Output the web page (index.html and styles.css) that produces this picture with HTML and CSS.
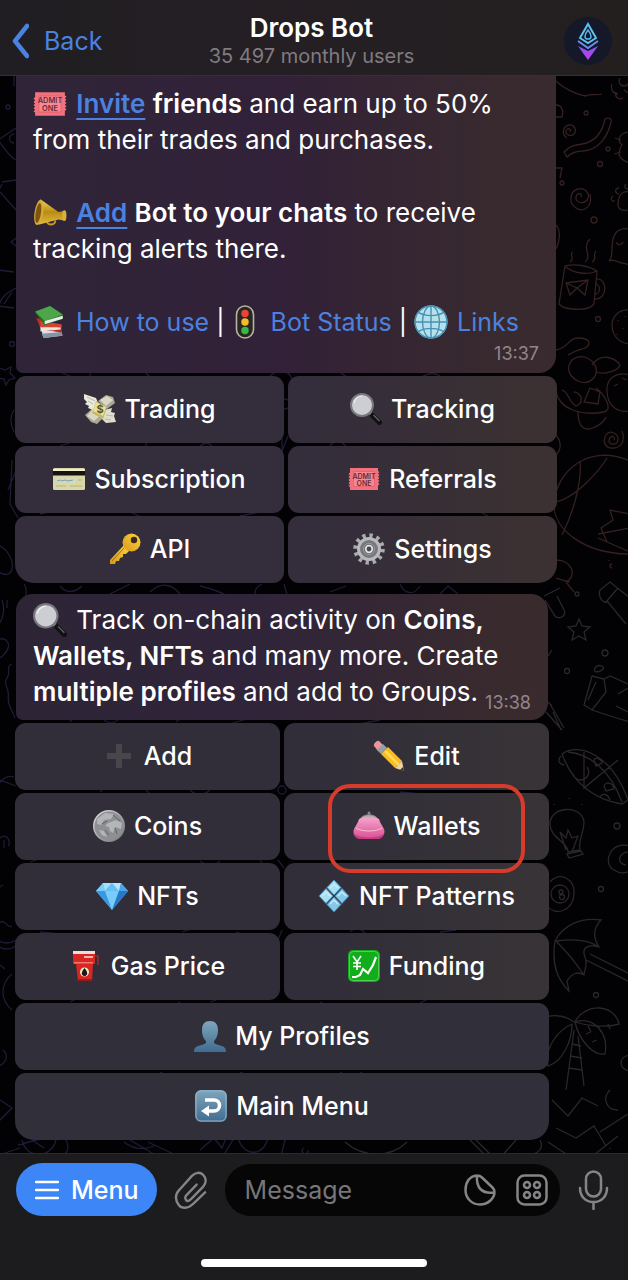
FILE: index.html
```html
<!DOCTYPE html>
<html lang="en">
<head>
    <meta charset="UTF-8">
    <meta name="viewport" content="width=device-width, initial-scale=1.0">
    <title>Drops Bot</title>
    <link rel="stylesheet" href="styles.css">
</head>
<body>
    <!-- Emoji set -->
    <svg class="sprite" width="0" height="0" aria-hidden="true">
        <defs>
            <linearGradient id="gold" x1="0" y1="0" x2="0" y2="1">
                <stop offset="0" stop-color="#f3dc5a"/><stop offset=".5" stop-color="#b98a14"/><stop offset="1" stop-color="#e3bd3c"/>
            </linearGradient>
            <linearGradient id="silver" x1="0" y1="0" x2="1" y2="1">
                <stop offset="0" stop-color="#e4e4e6"/><stop offset="1" stop-color="#6f7073"/>
            </linearGradient>
            <linearGradient id="steel" x1="0" y1="0" x2="0" y2="1">
                <stop offset="0" stop-color="#7fa6bd"/><stop offset="1" stop-color="#3f6c90"/>
            </linearGradient>
            <linearGradient id="key-gold" x1="0" y1="1" x2="1" y2="0">
                <stop offset="0" stop-color="#d59a1c"/><stop offset="1" stop-color="#ffd43c"/>
            </linearGradient>
            <linearGradient id="pink" x1="0" y1="0" x2="0" y2="1">
                <stop offset="0" stop-color="#f5a3cb"/><stop offset="1" stop-color="#d94f92"/>
            </linearGradient>
            <linearGradient id="logo" x1="0" y1="0" x2="0" y2="1">
                <stop offset="0" stop-color="#7a5cf0"/><stop offset=".5" stop-color="#a548ee"/><stop offset="1" stop-color="#c03be8"/>
            </linearGradient>
        </defs>
        <symbol id="ticket" viewBox="0 0 32 32">
            <path d="M2 5h28v3l1.500 1-1.500 1.500 1.500 1.500-1.500 1.500 1.500 1.500-1.500 1.500 1.500 1.500-1.500 1.500 1.500 1.500-1.500 1.500V27H2v-3L.5 23 2 21.500.5 20 2 18.500.5 17 2 15.500.5 14 2 12.500.5 11 2 9.500z" fill="#f2717e"/>
            <path d="M5.500 8.500h21v15h-21z" fill="#f78790" stroke="#df5f6e" stroke-width=".8"/>
            <text x="16" y="15.500" class="ticket-text">ADMIT</text>
            <text x="16" y="22.500" class="ticket-text">ONE</text>
        </symbol>
        <symbol id="horn" viewBox="0 0 32 32">
            <path d="M13 23c0 5 8 5 8 0" fill="none" stroke="#c39a25" stroke-width="1.800"/>
            <path d="M7 3l17 12 5-1v9l-5-1-19 5z" fill="url(#gold)"/>
            <ellipse cx="5.500" cy="15.500" rx="4" ry="12" transform="rotate(9 5.500 15.500)" fill="#d6ad36"/>
            <ellipse cx="5" cy="16" rx="2.500" ry="9.500" transform="rotate(9 5 16)" fill="#7d5510"/>
            <ellipse cx="29.500" cy="18.500" rx="2" ry="5" fill="#d8b13e"/>
        </symbol>
        <symbol id="books" viewBox="0 0 32 32">
            <path d="M8 24l19 1v4L10 31z" fill="#dcdde2"/><path d="M8 27l19-1.500 1 3.500-18 2z" fill="#8493a5"/>
            <path d="M3 12l4 10 20 4v-6z" fill="#b92d22"/><path d="M7 20l19 1v2l-19 2z" fill="#eee4dc"/><path d="M7 15l20 3v3L7 21z" fill="#d24434"/>
            <path d="M2 7l14-6 12 8v4l-17 6z" fill="#236f2b"/><path d="M2 6l14-5 12 8-17 6z" fill="#4fa64a"/><path d="M11 15l17-5v3l-17 5z" fill="#e8eee6"/>
        </symbol>
        <symbol id="light" viewBox="0 0 32 32">
            <rect x="8" y="1" width="16" height="30" rx="8" fill="#2a2723" stroke="#b9b3a3" stroke-width="1.500"/>
            <circle cx="16" cy="8" r="3.500" fill="#ec4339"/><circle cx="16" cy="16" r="3.500" fill="#f1bb29"/><circle cx="16" cy="24" r="3.500" fill="#35b948"/>
        </symbol>
        <symbol id="globe" viewBox="0 0 32 32">
            <circle cx="16" cy="16" r="15.500" fill="#b8e0ea"/>
            <g fill="none" stroke="#4391b5" stroke-width="1.300">
                <circle cx="16" cy="16" r="15"/><ellipse cx="16" cy="16" rx="8" ry="15"/><path d="M16 1v30M1 16h30M4 7c7 4 17 4 24 0M4 25c7-4 17-4 24 0"/>
            </g>
        </symbol>
        <symbol id="money" viewBox="0 0 32 32">
            <path d="M14 8l8-6 7 2 2 6-8 6zM9 15l-8 7 6 7 6 2 8-8z" fill="#aaa894"/>
            <path d="M16 7l7-4 6 4-7 6zM8 17l-5 6 7 5 6-5z" fill="#d9d8c6"/>
            <path d="M0 1l12 4 3 7-4 6-7-3 1-2-4-2 2-2-3-3z" fill="#e9e8da"/>
            <path d="M32 29l-10 1-5-5 3-8 8-2-1 4 4 1-1 3z" fill="#dfdecd"/>
            <path d="M12 8l11 6-4 12-11-6z" fill="#c4b568"/>
            <path d="M12 9l10 5-3 9-10-5z" fill="#e9df97"/>
            <text x="16" y="20" class="money-text">$</text>
            <path d="M3 4l8 4M4 8l5 3M21 26l6 1M22 22l7 1" stroke="#b1af9b" stroke-width=".8"/>
        </symbol>
        <symbol id="magnifier" viewBox="0 0 32 32">
            <path d="M20 20l3 3" stroke="#9b9ba0" stroke-width="3"/>
            <path d="M22.500 22.500l7 7" stroke="#111" stroke-width="5" stroke-linecap="round"/>
            <path d="M23.500 22l6 6" stroke="#66666c" stroke-width="1.200"/>
            <circle cx="12" cy="12" r="11" fill="#cdced4" stroke="#77777d" stroke-width="2"/>
            <path d="M4 10a8.500 8.500 0 0 1 8-7" fill="none" stroke="#f0f0f3" stroke-width="1.200"/>
        </symbol>
        <symbol id="card" viewBox="0 0 32 32">
            <rect y="5" width="32" height="22" rx="1.500" fill="#d9d7a5"/><path d="M0 6h32v2H0z" fill="#efedd0"/><path d="M0 8h32v4.500H0z" fill="#17140e"/>
            <path d="M3 15.500h19v4H3z" fill="#c9dcd3"/><path d="M4 18l3-1 2 1 3-1 3 1 5-1" stroke="#628490" fill="none" stroke-width=".7"/><path d="M25 17h4M3 23h10M17 23h12" stroke="#b5b38a" stroke-width="1"/>
        </symbol>
        <symbol id="key" viewBox="0 0 32 32">
            <path d="M15 12L1 27l0 4 5 0 1-3 3 0 1-3 3-1 0-3 3 0 4-4z" fill="url(#key-gold)"/>
            <path d="M15 15L3 28" stroke="#9d6d10" stroke-width="1"/>
            <circle cx="22.500" cy="9.500" r="9" fill="url(#key-gold)"/><circle cx="25" cy="7" r="3.200" fill="#3b2a14"/>
        </symbol>
        <symbol id="gear" viewBox="0 0 32 32">
            <circle cx="16" cy="16" r="13.500" fill="none" stroke="#a9abae" stroke-width="4.500" stroke-dasharray="3.300 3.769"/>
            <circle cx="16" cy="16" r="10.500" fill="#77797d" stroke="#b7b9bc" stroke-width="3"/>
            <circle cx="16" cy="16" r="5.500" fill="#62646a" stroke="#9b9da1"/><circle cx="16" cy="16" r="3.300" fill="#4a484e" stroke="#e0e1e3" stroke-width="1.800"/>
        </symbol>
        <symbol id="plus" viewBox="0 0 32 32"><path d="M13 4h6v9h9v6h-9v9h-6v-9H4v-6h9z" fill="#48464b"/></symbol>
        <symbol id="pencil" viewBox="0 0 32 32">
            <path d="M1 6c-1-2 3-6 5-5l4 4-5 6z" fill="#ef959a"/><path d="M4 10l6-6 4 4-6 6z" fill="#8fa0ab"/>
            <path d="M8 14l7-7 14 14-7 7z" fill="#f6bd24"/><path d="M12 11l14 14" stroke="#ffdb52" stroke-width="2.500"/>
            <path d="M29 21l2 10-9-3z" fill="#efd0a0"/><path d="M31 31l-1-4-3 3z" fill="#33302e"/>
        </symbol>
        <symbol id="coin" viewBox="0 0 32 32">
            <circle cx="16" cy="16" r="16" fill="url(#silver)"/><circle cx="16" cy="16" r="14.500" fill="#8e8f92"/>
            <path d="M4 9l8-6 9 1-3 5-7 1-3 5-4-1zM15 13l8-3 6 3-1 6-6-2-2 6-3-2-1-4-4-1zM6 20l5 1 3 6-5-2z" fill="#b4b5b8"/>
            <path d="M20 5l7 6M9 14l5-3M22 18l2 6M12 20l4 5" stroke="#626367" stroke-width="1"/>
        </symbol>
        <symbol id="purse" viewBox="0 0 32 32">
            <circle cx="16" cy="3" r="1.500" fill="#8d8b84"/><path d="M6 13C6 2 26 2 26 13z" fill="#b9a9ac" stroke="#8b8184"/>
            <path d="M6 9c5-2 15-2 20 0 1 4 3 6 5 10 2 6-3 10-7 10H8c-5 0-9-4-7-10 2-4 4-6 5-10z" fill="url(#pink)"/>
            <path d="M3 18c6 4 20 4 26 0" fill="none" stroke="#f8bfdb" stroke-width="1"/><path d="M1 23c3 6 27 6 30 0-1 5-4 6-8 6H9c-4 0-7-2-8-6z" fill="#c83983"/>
        </symbol>
        <symbol id="gem" viewBox="0 0 32 32">
            <path d="M7 3h18l7 8-16 19L0 11z" fill="#55b7f2"/><path d="M7 3L0 11h9z" fill="#79cdf8"/><path d="M7 3l2 8 7-8z" fill="#a5e0fb"/><path d="M16 3l-7 8h14z" fill="#65bef5"/><path d="M25 3l-2 8-7-8z" fill="#b9e5fb"/><path d="M25 3l7 8h-9z" fill="#4ba4ea"/>
            <path d="M0 11h9l7 19z" fill="#3a98e3"/><path d="M9 11h14l-7 19z" fill="#7bcbf9"/><path d="M23 11h9L16 30z" fill="#2878ca"/>
        </symbol>
        <symbol id="diamonds" viewBox="0 0 32 32">
            <g stroke="#4286b9" stroke-width="1"><path d="M16 0l7 7.500-7 7.500-7-7.500zM8 8.500l7 7.500-7 7.500L1 16z" fill="#a7e1f1"/><path d="M24 8.500l7 7.500-7 7.500-7-7.500zM16 17l7 7.500-7 7.500-7-7.500z" fill="#86c8e8"/></g>
            <path d="M12 8l4-4 4 4M4 16l4-4 4 4M20 16l4-4 4 4M12 24l4-4 4 4" fill="none" stroke="#c5ecf5" stroke-width="1.500"/>
        </symbol>
        <symbol id="fuel" viewBox="0 0 32 32">
            <path d="M25 6h3v9" fill="none" stroke="#a32a2a" stroke-width="1.500"/>
            <path d="M3 1h22v13h-2l-1 17H8L6 14H3z" fill="#d82722"/><path d="M3 1h22v3H3z" fill="#f0dcda"/><path d="M4 12h19v1.500H4z" fill="#f07972"/>
            <path d="M14 6h9v2h-9z" fill="#f3b2a8"/><circle cx="14.500" cy="22" r="4.500" fill="#f4e9cb"/><path d="M14.500 18c5 6 2 8 0 8s-5-2 0-8z" fill="#1c1a18"/><path d="M7 29h15v2H7z" fill="#981b1b"/>
        </symbol>
        <symbol id="chart" viewBox="0 0 32 32">
            <rect width="32" height="32" rx="5" fill="#12ad1c"/><rect x="1.500" y="1.500" width="29" height="29" rx="4" fill="none" stroke="#4fd252"/>
            <path d="M5 6l4 6 4-6M9 12v8M5 13h8M5 16.500h8" stroke="#fff" stroke-width="1.600" fill="none"/>
            <path d="M4 27h4l4-2 3-6 5 4 5-8 3-8" stroke="#fff" stroke-width="2.200" fill="none"/>
        </symbol>
        <symbol id="person" viewBox="0 0 32 32">
            <path d="M16 1c5 0 8 3 8 9s-2 9-4 11v2c4 3 12 2 12 8v1H0v-1c0-6 8-5 12-8v-2c-2-2-4-5-4-11s3-9 8-9z" fill="url(#steel)"/>
        </symbol>
        <symbol id="return" viewBox="0 0 32 32">
            <rect width="32" height="32" rx="6" fill="url(#steel)"/><rect x="1" y="1" width="30" height="30" rx="5" fill="none" stroke="#94b5ca"/>
            <path d="M10 10h9a5.500 5.500 0 0 1 0 11h-6" fill="none" stroke="#fff" stroke-width="3.500"/><path d="M6 21l8-5.500v11z" fill="#fff"/>
        </symbol>
    </svg>

    <!-- Wallpaper doodles -->
    <svg class="wallpaper" viewBox="0 0 628 1280" preserveAspectRatio="xMaxYMin slice" aria-hidden="true">
        <g class="doodle-warm">
            <path d="M556 81c8 8 22 14 30 15 6-3 10 0 16-2M612 84c-2 6 2 10 6 10M620 78c-2 4 0 8 4 8s6-4 4-8M616 92c-2 6 4 8 7 6M624 90l6 4"/>
            <path d="M556 105c6 0 8 6 6 12h-6M586 111a2 2 0 1 0 .1 4 2 2 0 0 0-.1-4"/>
            <path d="M570 132c2-3-3-5-4-1s5 6 8 3 1-10-5-9-8 9-2 13"/>
            <path d="M605 119c4-2 7 0 6 3-3 14-12 28-28 29-8 0-12 2-16 6l-3-5c6-6 10-7 18-8 12-2 20-10 23-25z"/>
            <circle cx="600" cy="164" r="2.500"/><circle cx="608" cy="149" r="2"/><circle cx="562" cy="183" r="2"/>
            <path d="M630 132c-10 0-14 8-8 13-4 6-6 14 8 18M621 140l-6-2M621 152l-7 2M556 168h6l-2 10"/>
            <path d="M581 197c2-4-4-5-5 0s7 8 11 3-1-13-9-11-10 14-2 19 17-2 14-14"/>
            <path d="M630 192c-10-2-12 6-12 14 2 6 8 4 12 4M619 188c-5 0-4 6 0 6M613 196c-3 2-2 6 2 5M626 184c-3 2 0 6 3 5"/>
            <circle cx="594" cy="220" r="3"/><circle cx="598" cy="319" r="2.500"/>
            <path d="M630 229c-14-2-18 6-18 20 0 6-1 10-3 12 7-3 10 3 14 2l7 2M616 242c2 4 6 3 7 0M556 225c5 6 4 16 0 24"/>
            <path d="M565 266c10-3 24 0 32 5l-3 33c-6 8-30 6-35 0zM565 266c8 8 24 9 32 5M596 279c12-2 12 22-2 20M595 284c6 0 6 10 0 10"/>
            <path d="M566 283l22-3-3 15-8-7-7 7zM566 283l11 5 11-8M570 262c6-4-2-8 3-10M585 262c8-6-4-14 5-23M592 262c6-3 0-8 4-11"/>
            <path d="M630 310c-24-2-24 32 0 34M618 320v1M623 328v1M617 334v1M625 316v1"/>
            <path d="M556 350c14-3 12-12 22-12 14 0 14 8 4 11-8 2-10 4-14 6M572 360c10-8 22 0 24 8 2 10-8 18-18 13s-12-14-6-21z"/>
            <path d="M592 365c10-14 24-6 28 0-2 6-16 10-24 7M556 392c4 18 26 24 48 20 10-2 0-18-8-24M562 390c8 3 6 12 14 16 10-4 4-14-2-14M578 412c0 12 4 18 12 17 6-2 14-6 16-12M590 388l10 4-2 12-14-2z"/>
            <path d="M630 375c-14-4-24 4-23 16 0 16 12 22 23 20M614 386l4-2M622 378l5 2"/>
            <path d="M614 440c2-4-4-5-5 0s8 6 9 0-8-11-12-5-1 14 8 13 11-9 8-17"/>
            <path d="M556 435c5 6 6 14 0 20M630 461c-40-18-74 9-76 43-1 25 30 50 76 50M580 461c2 20-6 50-18 74M607 458c-6 10-30 40-52 44"/>
            <path d="M630 514l-20-4 3 10-12 8 6 14M598 534l32-6M598 538l32 14"/>
            <path d="M556 560c16 0 22 16 10 22l8 10M556 578l14 4M609 560v1M612 564a2 2 0 1 0 .1 4"/>
        </g>
        <g class="doodle-gray">
            <path d="M545 600l10 16c4 4 12 0 9-6l-7-14M544 596l16-8M579 619l3 7 8 1-6 5 2 8-7-4-7 4 2-8-6-5 8-1z"/>
            <circle cx="605" cy="653" r="3"/><circle cx="567" cy="671" r="2.500"/><circle cx="577" cy="594" r="2"/>
            <path d="M600 590c-2 6 2 14 8 12l18 22M600 590l10-8 20 16M606 602l12-14"/>
            <path d="M592 676l12 3 2 13-14 18-8-5zM604 679l6-3 18 8M596 672c-4-2 0-8 6-6 4 2-1 6-6 6M592 710c12 4 24 8 38 12M618 694l10-6M616 706l12 6M596 682l-8 18"/>
            <path d="M546 712l16 18M550 704l14 24M553 712l8 18M546 700l6 6M552 650l-4 6"/>
            <path d="M562 754c16-12 50 0 66 46l-6 4c-28-4-50-22-60-50zM561 756c-4 4-2 8 3 9M568 752c22 2 42 18 54 50M584 752v36l34-28M573 774a8 8 0 1 0 14-7M594 760c2-4 8 0 8 3l-6 3zM604 786c2-6 10-2 10 3l-8 2zM600 798c2-6 8-4 10 2"/>
            <path d="M568 852c0-10-18-14-18-28 0-18 32-20 34-2 0 12-6 16-4 28zM566 850l-6-18 6 6 2-8 4 8 6-2-6 16M567 854l14-3 2 3-14 4zM554 804v1M569 798v1M582 804v1"/>
            <circle cx="617" cy="826" r="3"/><circle cx="601" cy="889" r="2.500"/><circle cx="596" cy="995" r="2.500"/>
            <path d="M630 846c-20-6-28 18-16 24 6 4 12 3 16 1M630 852c-12-1-14 12-4 13"/>
            <path d="M550 882c10-12 26-2 24 12-1 18-20 22-27 12"/><circle cx="560" cy="894" r="9"/><circle cx="561" cy="892" r="2"/><circle cx="562" cy="897" r="2.500"/>
            <path d="M555 941c8-16 26-24 46-21-8 8-8 18-2 27-10-3-18 0-14 10 3 7 0 10-1 18-6-4-12-2-17 6l2 10c-10-10-18-24-14-50zM556 941c14-2 32-2 43 6M556 941c8 8 20 22 28 34M586 960l44 22M590 954l40 20"/>
            <path d="M575 1022c10-20 40-18 44 2-14 4-32 2-44-2zM575 1022c18-6 34 10 30 32-12 2-26-14-30-32zM574 1022c-10-8-26-8-34-2v14M572 1024c-14 6-28 24-24 42 14-4 24-24 24-42M574 1030l-8 60M578 1036l6 50M572 1044l9 2M570 1056l12 2M569 1068l13 2M588 1026l3 6M598 1026l3 6M608 1024l2 5M586 1034l5-2M592 1042l5-2"/>
            <path d="M630 1055c-12 2-12 14 0 16M552 1100l16 16 14-18 16 8M610 1090c-8 8-4 20 8 20M556 1128l20 10 18-12 12 20M600 1132l28-18M548 1142l24 16M590 1158l28-22M610 1148v1M470 1140l20 20M476 1140l20 20M500 1158l16-18M540 1140c8 16-20 18-30 14M345 1142c18 16 46 16 62 0"/>
        </g>
        <g class="doodle-cool">
            <circle cx="8" cy="107" r="2"/><path d="M14 76v10M-2 140l18-12M-2 140c8 10 12 18 18 20M14 134a4 4 0 1 0 0 9M2 182l14-2M0 192l16 18M2 184l-4 8M16 238l-5 4 5 4M-2 270l16 2M-2 310c2-14 10-18 18-22M-2 306l16 2M12 292l-8 12"/>
            <circle cx="12" cy="344" r="2.500"/><path d="M0 368l5 2 6-3-1 6 5 5-6 2-3 5-2-6-6-1M14 410c-4 6-4 14 0 22M12 460l-2 44 8 14M18 466l-10 24M-2 545c10 4 16 16 14 24s-10 6-14 2M2 600c4 10 0 20-3 24M7 600v8M-2 640c8-4 14 4 8 12s-8 6-8 4M12 664c-6 2-2 8-4 12s-4 6-1 12 0 10 2 16 4 8 6 14"/>
            <path d="M-2 785c6-8 10-10 16-8M0 780l16 6M0 838c6-6 12 4 8 8M4 840v8M-2 888l5-3M-2 924c8-8 8 6 14 2M-2 940c6 4 12 4 18 0M-2 946c6 4 12 4 18 0M12 974c-12 10-12 26 0 36M0 965l5 4M2 1050c8 4 4 14-4 16M0 1100l12 8-14 14"/>
            <path d="M20 1148l-18 6M18 1145l22-6M22 1140c4 20 30 18 34 0M32 1140l12 8M66 1140c4 8 2 14-8 18M124 1142c10 8 20 8 30 4M130 1140l34 20M148 1142l34 16M200 1150l14-12 8 10 4-10M222 1158l12-20M238 1138c6 20 26 18 30 0M286 1136l-6 24M304 1148a3 3 0 1 0 4 2"/>
            <path d="M24 584c4 6 2 14 0 20M60 586c8 10 18 4 22 0M110 594l20-10M150 592c12-12 24-6 30 2M200 586c10 2 20 6 28 10M262 584c-8 4-10 12-2 14M284 584l4 14M330 592l16-6M400 584c4 10 14 12 20 2M440 594l8-8 10 8M60 372l20 8M90 370v10M145 372l6 6M270 376c8-8 20-6 22 4M340 372c8 6 8 8 20 4M420 378c10-6 16-6 22 0M60 446l12-4M146 440v10M200 446c6-4 8-4 12 0M330 446c6-8 12-4 16 0M40 514l16-4M130 512l14 6M240 516l20-4M480 512l8 4M70 722l6-8M104 720c6 4 8 4 14 0M176 722l8-6M230 724l20-6M360 724l20-4M100 792l6-6M146 790l6 6M190 790c8 8 16 4 20 0M400 792l20 2M30 862l12-4M200 861c8 6 14 6 20 0M260 860l4 6M40 932l20 2M182 932l12-4M236 932l12 4M350 932c6-6 10-4 16 2M440 932l16-2M70 1002l8-4M178 1002l10 4M210 1002l12-4M320 1002l10 4M420 1003l8-4M160 1072l8 4M240 1072l10 4M340 1072c8 6 16 4 22 0"/>
            <circle cx="285" cy="404" r="5"/><circle cx="282" cy="790" r="4"/><path d="M282 438v16M288 436l-8 20M278 860l6 8M282 930l-4 10"/>
        </g>
    </svg>

    <header class="topbar">
        <button type="button" class="back">
            <svg width="18" height="36" viewBox="0 0 18 36" aria-hidden="true"><path d="M16 3L4 18l12 15" fill="none" stroke="#4b82e0" stroke-width="4.500" stroke-linecap="round" stroke-linejoin="round"/></svg>
            Back
        </button>
        <div class="chat-title">
            <h1>Drops Bot</h1>
            <p>35 497 monthly users</p>
        </div>
        <button type="button" class="avatar" aria-label="Bot profile">
            <svg width="24" height="38" viewBox="0 0 24 38" fill="none" aria-hidden="true">
                <path d="M12 2l8 14-8 5-8-5z" stroke="#59c2ef" stroke-width="2"/>
                <path d="M12 8c4 5 4 9 0 9s-4-4 0-9z" stroke="#59b4f0" stroke-width="1.500"/>
                <path d="M2 19l10 7 10-7" stroke="#6a8cf0" stroke-width="2"/>
                <path d="M2 24l10 5 10-5-10 14z" fill="url(#logo)"/>
            </svg>
        </button>
    </header>

    <main class="chat">
        <section class="block block-wide">
            <article class="message message-top">
                <p><svg class="emoji"><use href="#ticket"/></svg> <a href="#invite" class="strong-link">Invite</a> <b>friends</b> and earn up to 50% from their trades and purchases.</p>
                <p><svg class="emoji"><use href="#horn"/></svg> <a href="#add" class="strong-link">Add</a> <b>Bot to your chats</b> to receive tracking alerts there.</p>
                <p class="links"><svg class="emoji"><use href="#books"/></svg> <a href="#how">How to use</a> | <svg class="emoji emoji-light"><use href="#light"/></svg> <a href="#status">Bot Status</a> | <svg class="emoji"><use href="#globe"/></svg> <a href="#links">Links</a></p>
                <time>13:37</time>
            </article>
            <div class="keyboard">
                <button type="button"><svg class="emoji"><use href="#money"/></svg>Trading</button>
                <button type="button"><svg class="emoji"><use href="#magnifier"/></svg>Tracking</button>
                <button type="button"><svg class="emoji"><use href="#card"/></svg>Subscription</button>
                <button type="button"><svg class="emoji"><use href="#ticket"/></svg>Referrals</button>
                <button type="button" class="corner-left"><svg class="emoji"><use href="#key"/></svg>API</button>
                <button type="button" class="corner-right"><svg class="emoji"><use href="#gear"/></svg>Settings</button>
            </div>
        </section>

        <section class="block">
            <article class="message message-track">
                <p><svg class="emoji"><use href="#magnifier"/></svg> Track on-chain activity on <b>Coins, Wallets, NFTs</b> and many more. Create <b>multiple profiles</b> and add to Groups. <time>13:38</time></p>
            </article>
            <div class="keyboard keyboard-cool">
                <button type="button"><svg class="emoji"><use href="#plus"/></svg>Add</button>
                <button type="button"><svg class="emoji"><use href="#pencil"/></svg>Edit</button>
                <button type="button"><svg class="emoji"><use href="#coin"/></svg>Coins</button>
                <button type="button" class="marked"><svg class="emoji"><use href="#purse"/></svg>Wallets</button>
                <button type="button"><svg class="emoji"><use href="#gem"/></svg>NFTs</button>
                <button type="button"><svg class="emoji"><use href="#diamonds"/></svg>NFT Patterns</button>
                <button type="button"><svg class="emoji"><use href="#fuel"/></svg>Gas Price</button>
                <button type="button"><svg class="emoji"><use href="#chart"/></svg>Funding</button>
                <button type="button" class="full"><svg class="emoji"><use href="#person"/></svg>My Profiles</button>
                <button type="button" class="full corner-left corner-right"><svg class="emoji"><use href="#return"/></svg>Main Menu</button>
            </div>
        </section>
    </main>

    <footer class="composer">
        <div class="composer-row">
            <button type="button" class="menu-button">
                <svg width="24" height="20" viewBox="0 0 24 20" aria-hidden="true"><path d="M1 2h22M1 10h22M1 18h22" stroke="#fff" stroke-width="2.500" stroke-linecap="round"/></svg>
                Menu
            </button>
            <button type="button" class="icon-button attach" aria-label="Attach file">
                <svg width="34" height="38" viewBox="0 0 34 38"><path d="M23 13L12 24c-2 2-1 5 1 6 2 0 3-1 4-2l13-13c4-4 3-9 0-12s-8-3-12 1L5 18c-6 6-4 12-1 16s10 4 15-1l13-12" transform="translate(1 1) scale(.94 .97)"/></svg>
            </button>
            <div class="field">
                <input type="text" placeholder="Message" aria-label="Message">
                <button type="button" class="icon-button" aria-label="Stickers">
                    <svg width="32" height="32" viewBox="0 0 32 32"><path d="M13 1.500C5 2 1.500 9 1.500 16c0 8 6 14.500 14.500 14.500S30.500 24 30.500 18c0-2-.5-3-2-4.500L18 3.500C16.500 2 15 1.500 13 1.500zM13 1.500C12 14 18 20 30 18.500"/></svg>
                </button>
                <button type="button" class="icon-button" aria-label="Bot commands">
                    <svg width="32" height="32" viewBox="0 0 32 32"><rect x="1.500" y="1.500" width="29" height="29" rx="7"/><circle cx="11" cy="11" r="3"/><circle cx="21" cy="11" r="3"/><circle cx="11" cy="21" r="3"/><circle cx="21" cy="21" r="3"/></svg>
                </button>
            </div>
            <button type="button" class="icon-button" aria-label="Voice message">
                <svg width="32" height="40" viewBox="0 0 32 40"><rect x="8" y="1.500" width="15" height="25" rx="7.500"/><path d="M2 18c0 8 5 14 13.500 14S29 26 29 18M15.500 32v7"/></svg>
            </button>
        </div>
        <div class="home-indicator"></div>
    </footer>
</body>
</html>
```
FILE: styles.css
```css
* {
    box-sizing: border-box;
}

body {
    margin: 0;
    min-height: 100vh;
    display: flex;
    flex-direction: column;
    position: relative;
    overflow-x: hidden;
    background-color: #020104;
    color: #fff;
    font-family: Inter, Roboto, "Liberation Sans", sans-serif;
    font-size: 25px;
    line-height: 36px;
}

h1, p {
    margin: 0;
}

button {
    border: none;
    padding: 0;
    background: none;
    color: inherit;
    font: inherit;
    cursor: pointer;
}

a {
    color: #4b82e0;
    text-decoration: none;
}

b {
    font-weight: 600;
}

.sprite {
    position: absolute;
}

.ticket-text {
    font-size: 7px;
    font-weight: 600;
    text-anchor: middle;
    fill: #6b2a34;
}

.money-text {
    font-size: 11px;
    font-weight: 700;
    text-anchor: middle;
    fill: #5f5522;
}

.wallpaper {
    position: absolute;
    top: 0;
    left: 0;
    width: 100%;
    height: 100%;
    z-index: -1;
    fill: none;
    stroke-width: 1.3;
}

.doodle-warm {
    stroke: #35211f;
}

.doodle-gray {
    stroke: #2b2728;
}

.doodle-cool {
    stroke: #211b36;
}

/* Top bar */
.topbar {
    display: grid;
    grid-template-columns: 1fr auto 1fr;
    align-items: center;
    height: 76px;
    padding: 6px 16px 0 11px;
    background: linear-gradient(to right, #201e22, #251f24 50%, #231f1f);
    border-bottom: 1px solid #343136;
}

.back {
    display: flex;
    align-items: center;
    gap: 15px;
    justify-self: start;
    color: #4b82e0;
}

.chat-title {
    text-align: center;
}

.chat-title h1 {
    font-size: 26px;
    font-weight: 600;
    line-height: 30px;
}

.chat-title p {
    font-size: 20px;
    line-height: 26px;
    color: #7f7b80;
}

.avatar {
    display: flex;
    align-items: center;
    justify-content: center;
    justify-self: end;
    width: 48px;
    height: 48px;
    border-radius: 50%;
    background-color: #151829;
}

/* Messages */
.chat {
    flex: 1;
    padding: 0 0 12px 16px;
}

.block {
    margin-right: 80px;
    margin-bottom: 11px;
}

.block:last-child {
    margin-bottom: 0;
}

.block-wide {
    margin-right: 72px;
}

.message {
    padding: 8px 17px 10px;
    border-radius: 17px 17px 17px 7px;
    background: linear-gradient(to right, #2d2536, #30243a 45%, #392a2e 90%);
    font-size: 26px;
}

.message-top {
    padding: 10px 17px 5px;
    border-radius: 0 0 17px 7px;
    background: linear-gradient(to right, #2f2538, #322138 50%, #382a2e 90%);
}

.message-top p + p {
    margin-top: 37px;
}

.message time {
    font-size: 18px;
    line-height: 20px;
    color: #93868e;
}

.message-top time {
    display: block;
    line-height: 28px;
    text-align: right;
}

.message-track time {
    float: right;
    margin-top: 19px;
}

.strong-link {
    font-weight: 600;
    text-decoration: underline;
    text-decoration-thickness: 2px;
    text-underline-offset: 5px;
}

.links {
    font-size: 25px;
    white-space: nowrap;
}

.emoji {
    width: 34px;
    height: 34px;
    flex: none;
}

.message .emoji {
    margin-right: 2px;
    vertical-align: -8px;
}

.message .emoji-light {
    margin-left: -4px;
}

/* Inline keyboard */
.keyboard {
    display: grid;
    grid-template-columns: 1fr 1fr;
    gap: 3px 4px;
    margin: 3px -1px 0;
}

.keyboard button {
    display: flex;
    align-items: center;
    justify-content: center;
    gap: 9px;
    height: 67px;
    padding-bottom: 1px;
    border-radius: 11px;
    background: linear-gradient(to right, #342d3b 50%, #3b3132 85%) fixed;
    font-weight: 500;
}

.keyboard-cool button {
    background: linear-gradient(to right, #312e3a 50%, #373336 85%) fixed;
}

.keyboard .full {
    grid-column: 1 / -1;
    background: #31303a;
}

.keyboard .corner-left {
    border-bottom-left-radius: 19px;
}

.keyboard .corner-right {
    border-bottom-right-radius: 19px;
}

.keyboard .emoji {
    width: 32px;
    height: 32px;
}

.marked {
    position: relative;
}

.marked::after {
    content: "";
    position: absolute;
    top: -9px;
    right: 24px;
    bottom: -13px;
    left: 44px;
    border: 4px solid #d63b2b;
    border-radius: 22px;
}

/* Composer */
.composer {
    height: 127px;
    border-top: 1px solid #2b2a2e;
    background-color: #1c1c1f;
}

.composer-row {
    display: flex;
    align-items: center;
    padding: 9px 18px 0 16px;
}

.menu-button {
    display: flex;
    align-items: center;
    gap: 12px;
    height: 53px;
    padding: 0 18px 0 19px;
    border-radius: 27px;
    background-color: #3d86f7;
    font-weight: 500;
}

.icon-button {
    display: flex;
    flex: none;
}

.icon-button svg {
    fill: none;
    stroke: #858487;
    stroke-width: 2.5;
    stroke-linecap: round;
}

.attach {
    margin: 0 17px;
}

.field {
    display: flex;
    flex: 1;
    align-items: center;
    gap: 20px;
    min-width: 0;
    height: 52px;
    margin-right: 18px;
    padding: 0 12px 0 20px;
    border-radius: 26px;
    background-color: #060606;
}

.field input {
    flex: 1;
    min-width: 0;
    padding: 0;
    border: none;
    outline: none;
    background: none;
    color: #fff;
    font: inherit;
}

.field input::placeholder {
    color: #77767a;
    opacity: 1;
}

.home-indicator {
    width: 36%;
    height: 8px;
    margin: 43px auto 0;
    border-radius: 4px;
    background-color: #fff;
}
```
